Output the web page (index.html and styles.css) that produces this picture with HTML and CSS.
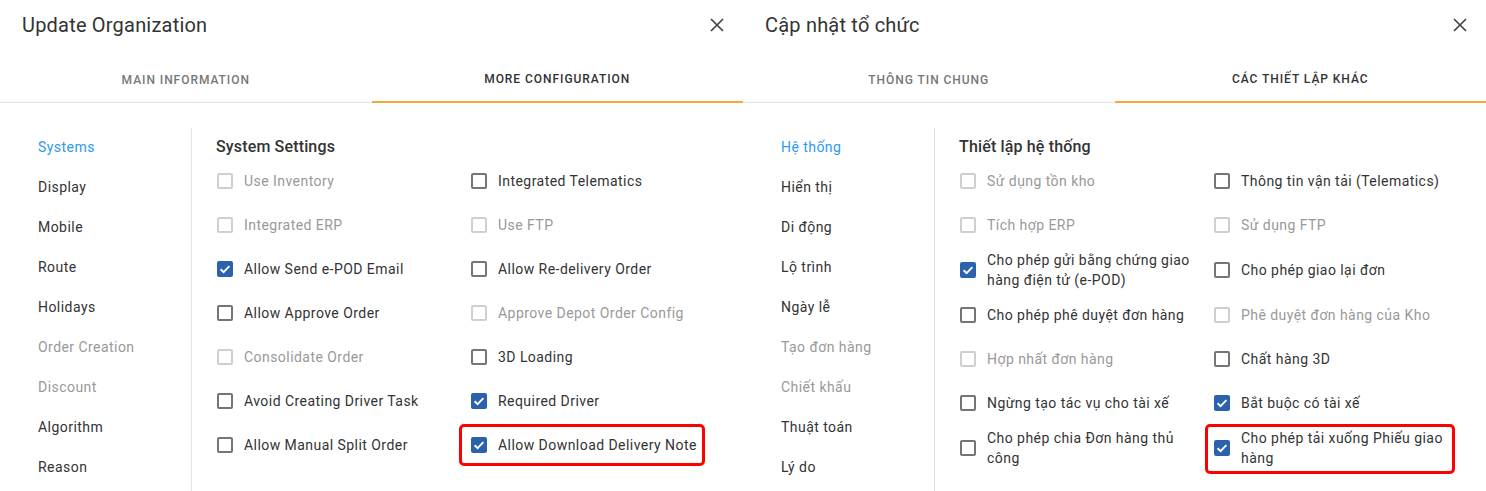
FILE: index.html
```html
<!DOCTYPE html>
<html lang="en">
<head>
<meta charset="utf-8">
<title>Update Organization</title>
<link rel="stylesheet" href="styles.css">
</head>
<body>
<div class="screen">
  <section class="dialog">
    <header class="dlg-head">
      <h1 class="dlg-title">Update Organization</h1>
      <button class="close" aria-label="Close"><svg width="14" height="14" viewBox="0 0 14 14"><path d="M1 1L13 13M13 1L1 13" stroke="#444" stroke-width="1.7" fill="none"/></svg></button>
    </header>
    <nav class="tabs">
      <div class="tab">Main Information</div>
      <div class="tab active">More Configuration</div>
    </nav>
    <div class="dlg-body">
      <ul class="side">
        <li class="side-item current">Systems</li>
        <li class="side-item">Display</li>
        <li class="side-item">Mobile</li>
        <li class="side-item">Route</li>
        <li class="side-item">Holidays</li>
        <li class="side-item off">Order Creation</li>
        <li class="side-item off">Discount</li>
        <li class="side-item">Algorithm</li>
        <li class="side-item">Reason</li>
      </ul>
      <div class="settings">
        <h2 class="settings-title">System Settings</h2>
        <div class="grid">
          <label class="opt off"><span class="box"></span><span class="txt">Use Inventory</span></label>
          <label class="opt"><span class="box"></span><span class="txt">Integrated Telematics</span></label>
          <label class="opt off"><span class="box"></span><span class="txt">Integrated ERP</span></label>
          <label class="opt off"><span class="box"></span><span class="txt">Use FTP</span></label>
          <label class="opt"><span class="box on"><svg viewBox="0 0 16 16"><path d="M3.6 8.2L6.6 11.1L12.4 5.2" stroke="#fff" stroke-width="1.9" fill="none"/></svg></span><span class="txt">Allow Send e-POD Email</span></label>
          <label class="opt"><span class="box"></span><span class="txt">Allow Re-delivery Order</span></label>
          <label class="opt"><span class="box"></span><span class="txt">Allow Approve Order</span></label>
          <label class="opt off"><span class="box"></span><span class="txt">Approve Depot Order Config</span></label>
          <label class="opt off"><span class="box"></span><span class="txt">Consolidate Order</span></label>
          <label class="opt"><span class="box"></span><span class="txt">3D Loading</span></label>
          <label class="opt"><span class="box"></span><span class="txt">Avoid Creating Driver Task</span></label>
          <label class="opt"><span class="box on"><svg viewBox="0 0 16 16"><path d="M3.6 8.2L6.6 11.1L12.4 5.2" stroke="#fff" stroke-width="1.9" fill="none"/></svg></span><span class="txt">Required Driver</span></label>
          <label class="opt"><span class="box"></span><span class="txt">Allow Manual Split Order</span></label>
          <label class="opt mark mark-en"><span class="box on"><svg viewBox="0 0 16 16"><path d="M3.6 8.2L6.6 11.1L12.4 5.2" stroke="#fff" stroke-width="1.9" fill="none"/></svg></span><span class="txt">Allow Download Delivery Note</span></label>
        </div>
      </div>
    </div>
  </section>

  <section class="dialog">
    <header class="dlg-head">
      <h1 class="dlg-title">Cập nhật tổ chức</h1>
      <button class="close" aria-label="Đóng"><svg width="14" height="14" viewBox="0 0 14 14"><path d="M1 1L13 13M13 1L1 13" stroke="#444" stroke-width="1.7" fill="none"/></svg></button>
    </header>
    <nav class="tabs">
      <div class="tab">Thông tin chung</div>
      <div class="tab active">Các thiết lập khác</div>
    </nav>
    <div class="dlg-body">
      <ul class="side">
        <li class="side-item current">Hệ thống</li>
        <li class="side-item">Hiển thị</li>
        <li class="side-item">Di động</li>
        <li class="side-item">Lộ trình</li>
        <li class="side-item">Ngày lễ</li>
        <li class="side-item off">Tạo đơn hàng</li>
        <li class="side-item off">Chiết khấu</li>
        <li class="side-item">Thuật toán</li>
        <li class="side-item">Lý do</li>
      </ul>
      <div class="settings">
        <h2 class="settings-title">Thiết lập hệ thống</h2>
        <div class="grid">
          <label class="opt off"><span class="box"></span><span class="txt">Sử dụng tồn kho</span></label>
          <label class="opt"><span class="box"></span><span class="txt">Thông tin vận tải (Telematics)</span></label>
          <label class="opt off"><span class="box"></span><span class="txt">Tích hợp ERP</span></label>
          <label class="opt off"><span class="box"></span><span class="txt">Sử dụng FTP</span></label>
          <label class="opt"><span class="box on"><svg viewBox="0 0 16 16"><path d="M3.6 8.2L6.6 11.1L12.4 5.2" stroke="#fff" stroke-width="1.9" fill="none"/></svg></span><span class="txt">Cho phép gửi bằng chứng giao hàng điện tử (e-POD)</span></label>
          <label class="opt"><span class="box"></span><span class="txt">Cho phép giao lại đơn</span></label>
          <label class="opt"><span class="box"></span><span class="txt">Cho phép phê duyệt đơn hàng</span></label>
          <label class="opt off"><span class="box"></span><span class="txt">Phê duyệt đơn hàng của Kho</span></label>
          <label class="opt off"><span class="box"></span><span class="txt">Hợp nhất đơn hàng</span></label>
          <label class="opt"><span class="box"></span><span class="txt">Chất hàng 3D</span></label>
          <label class="opt"><span class="box"></span><span class="txt">Ngừng tạo tác vụ cho tài xế</span></label>
          <label class="opt"><span class="box on"><svg viewBox="0 0 16 16"><path d="M3.6 8.2L6.6 11.1L12.4 5.2" stroke="#fff" stroke-width="1.9" fill="none"/></svg></span><span class="txt">Bắt buộc có tài xế</span></label>
          <label class="opt"><span class="box"></span><span class="txt">Cho phép chia Đơn hàng thủ công</span></label>
          <label class="opt mark mark-vi"><span class="box on"><svg viewBox="0 0 16 16"><path d="M3.6 8.2L6.6 11.1L12.4 5.2" stroke="#fff" stroke-width="1.9" fill="none"/></svg></span><span class="txt">Cho phép tải xuống Phiếu giao hàng</span></label>
        </div>
      </div>
    </div>
  </section>
</div>
</body>
</html>
```

FILE: styles.css
```css
* { box-sizing: border-box; }
html, body { margin: 0; padding: 0; background: #fff; }
body {
  font-family: Roboto, "Noto Sans", "Liberation Sans", sans-serif;
  color: #333;
  overflow: hidden;
}
.screen {
  display: flex;
  width: 1486px;
  height: 491px;
  overflow: hidden;
}
.dialog {
  width: 743px;
  flex: none;
  display: flex;
  flex-direction: column;
  height: 491px;
  overflow: hidden;
}
.dlg-head {
  height: 55px;
  display: flex;
  align-items: flex-start;
  justify-content: space-between;
  padding: 12px 19px 0 22px;
}
.dlg-title {
  margin: 0;
  font-size: 20px;
  font-weight: 400;
  line-height: 26px;
  letter-spacing: 0.2px;
  color: #333;
}
.close {
  border: 0;
  background: none;
  padding: 0;
  margin-top: 6px;
  width: 14px;
  height: 14px;
  display: flex;
}
.tabs {
  display: flex;
  height: 48px;
  border-bottom: 1px solid #e3e3e3;
}
.tab {
  flex: 1;
  display: flex;
  align-items: center;
  justify-content: center;
  font-size: 12px;
  font-weight: 500;
  letter-spacing: 0.95px;
  text-transform: uppercase;
  color: #777;
  padding-top: 2px;
}
.tab.active {
  color: #333;
  border-bottom: 2px solid #f5a93a;
  margin-bottom: -1px;
}
.dlg-body {
  flex: 1;
  display: flex;
  padding-top: 24px;
  min-height: 0;
}
.side {
  list-style: none;
  margin: 0;
  padding: 0 0 0 38px;
  width: 192px;
  flex: none;
  border-right: 1px solid #e3e3e3;
  margin-top: 1px;
}
.side-item {
  height: 40px;
  line-height: 38px;
  font-size: 14px;
  letter-spacing: 0.45px;
  color: #333;
}
.side-item.current { color: #2e9af0; }
.side-item.off { color: #999; }
.settings {
  padding-left: 24px;
  flex: 1;
}
.settings-title {
  margin: 8px 0 0;
  font-size: 16px;
  font-weight: 500;
  line-height: 24px;
  letter-spacing: 0.15px;
  color: #333;
}
.grid {
  display: grid;
  grid-template-columns: 254px 254px;
}
.opt {
  display: flex;
  align-items: center;
  gap: 11px;
  padding: 3px 14px 3px 1px;
  min-height: 44px;
  font-size: 14px;
  line-height: 20px;
  letter-spacing: 0.45px;
  color: #333;
  position: relative;
}
.opt.off { color: #999; }
.box {
  width: 16px;
  height: 16px;
  flex: none;
  border: 2px solid #757575;
  border-radius: 2px;
  display: block;
}
.opt.off .box { border-color: #cfcfcf; }
.box.on {
  border: 0;
  background: #2b62ae;
}
.box svg { display: block; width: 16px; height: 16px; }
.mark::after {
  content: "";
  position: absolute;
  border: 3px solid #ff0000;
  border-radius: 5px;
  pointer-events: none;
}
.mark-en::after { left: -11px; right: 19px; top: 1px; bottom: 1px; }
.mark-vi::after { left: -8px; right: 12px; top: -1px; bottom: -3px; }
```
